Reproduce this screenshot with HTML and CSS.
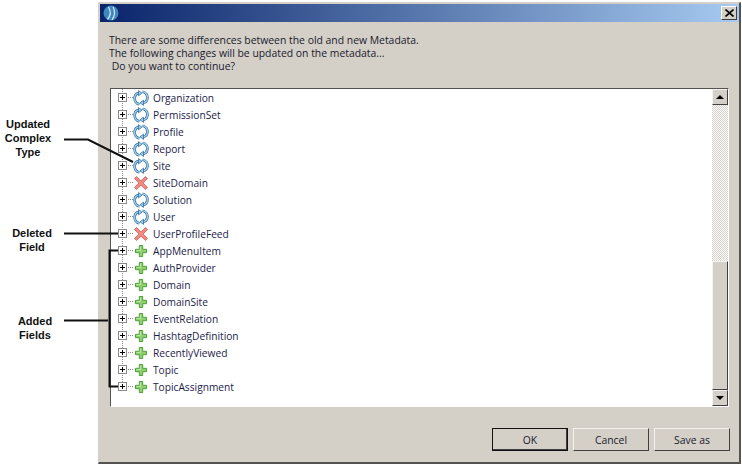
FILE: index.html
```html
<!DOCTYPE html>
<html lang="en">
<head>
<meta charset="utf-8">
<title>Metadata differences</title>
<link rel="stylesheet" href="styles.css">
</head>
<body>
<svg class="defs" width="0" height="0" aria-hidden="true">
  <symbol id="sync" viewBox="0 0 16 16">
    <g fill="none">
      <path d="M6.500 14.300 C3 13.500 1.300 10.500 1.700 7.300 C2 5 3.800 3.400 6 3.200" stroke="#2f6f9f" stroke-width="2.700"/>
      <path d="M9.500 1.700 C13 2.500 14.700 5.500 14.300 8.700 C14 11 12.200 12.600 10 12.800" stroke="#2f6f9f" stroke-width="2.700"/>
      <path d="M6.500 14.300 C3 13.500 1.300 10.500 1.700 7.300 C2 5 3.800 3.400 6 3.200" stroke="#a5cfec" stroke-width="1.300"/>
      <path d="M9.500 1.700 C13 2.500 14.700 5.500 14.300 8.700 C14 11 12.200 12.600 10 12.800" stroke="#a5cfec" stroke-width="1.300"/>
    </g>
    <path d="M5.500 .6 L9 3.200 L5.500 5.800 Z" fill="#a5cfec" stroke="#2f6f9f" stroke-width=".8"/>
    <path d="M10.500 10.200 L7 12.800 L10.500 15.400 Z" fill="#a5cfec" stroke="#2f6f9f" stroke-width=".8"/>
  </symbol>
  <symbol id="del" viewBox="0 0 16 16">
    <path d="M1.500 3.500 L3.500 1.500 L8 5.800 L12.500 1.500 L14.500 3.500 L10.200 8 L14.500 12.500 L12.500 14.500 L8 10.200 L3.500 14.500 L1.500 12.500 L5.800 8 Z" fill="#ee8a82" stroke="#c9605a" stroke-width=".8"/>
  </symbol>
  <symbol id="add" viewBox="0 0 16 16">
    <path d="M6.300 2.500 H9.700 V6.300 H13.500 V9.700 H9.700 V13.500 H6.300 V9.700 H2.500 V6.300 H6.300 Z" fill="#8fd06f" stroke="#4f9e3c" stroke-width="1"/>
    <path d="M7.400 3.500 V7.400 H3.500" fill="none" stroke="#c8eeb4" stroke-width=".8"/>
  </symbol>
  <symbol id="exp" viewBox="0 0 9 9">
    <rect x=".5" y=".5" width="8" height="8" fill="#fff" stroke="#8a8a8a"/>
    <path d="M2 4.500 H7 M4.500 2 V7" stroke="#000" fill="none"/>
  </symbol>
</svg>

<div class="screen">
  <div class="callout callout-complex">Updated<br>Complex<br>Type</div>
  <div class="callout callout-deleted">Deleted<br>Field</div>
  <div class="callout callout-added">Added<br>Fields</div>

  <div class="dialog">
    <header class="titlebar">
      <svg class="app-icon" width="16" height="16" viewBox="0 0 16 16">
        <circle cx="8" cy="8" r="7.500" fill="#3f87bf"/>
        <path d="M5.500 2 C8 6 7.500 11 4.500 14.500 M10 2 C12.300 6 11.800 11 9 14.800" fill="none" stroke="#d5e6f3" stroke-width="1.200"/>
      </svg>
      <button class="close" type="button" aria-label="Close">
        <svg width="9" height="8" viewBox="0 0 9 8"><path d="M.5 .5 L8.500 7.500 M8.500 .5 L.5 7.500" stroke="#000" stroke-width="1.600"/></svg>
      </button>
    </header>

    <div class="content">
      <p class="message">There are some differences between the old and new Metadata.<br>The following changes will be updated on the metadata...<br>&nbsp;Do you want to continue?</p>

      <div class="treebox">
        <ul class="tree">
          <li class="row"><svg class="exp"><use href="#exp"/></svg><span class="dots"></span><svg class="ic"><use href="#sync"/></svg><span>Organization</span></li>
          <li class="row"><svg class="exp"><use href="#exp"/></svg><span class="dots"></span><svg class="ic"><use href="#sync"/></svg><span>PermissionSet</span></li>
          <li class="row"><svg class="exp"><use href="#exp"/></svg><span class="dots"></span><svg class="ic"><use href="#sync"/></svg><span>Profile</span></li>
          <li class="row"><svg class="exp"><use href="#exp"/></svg><span class="dots"></span><svg class="ic"><use href="#sync"/></svg><span>Report</span></li>
          <li class="row"><svg class="exp"><use href="#exp"/></svg><span class="dots"></span><svg class="ic"><use href="#sync"/></svg><span>Site</span></li>
          <li class="row"><svg class="exp"><use href="#exp"/></svg><span class="dots"></span><svg class="ic"><use href="#del"/></svg><span>SiteDomain</span></li>
          <li class="row"><svg class="exp"><use href="#exp"/></svg><span class="dots"></span><svg class="ic"><use href="#sync"/></svg><span>Solution</span></li>
          <li class="row"><svg class="exp"><use href="#exp"/></svg><span class="dots"></span><svg class="ic"><use href="#sync"/></svg><span>User</span></li>
          <li class="row"><svg class="exp"><use href="#exp"/></svg><span class="dots"></span><svg class="ic"><use href="#del"/></svg><span>UserProfileFeed</span></li>
          <li class="row"><svg class="exp"><use href="#exp"/></svg><span class="dots"></span><svg class="ic"><use href="#add"/></svg><span>AppMenuItem</span></li>
          <li class="row"><svg class="exp"><use href="#exp"/></svg><span class="dots"></span><svg class="ic"><use href="#add"/></svg><span>AuthProvider</span></li>
          <li class="row"><svg class="exp"><use href="#exp"/></svg><span class="dots"></span><svg class="ic"><use href="#add"/></svg><span>Domain</span></li>
          <li class="row"><svg class="exp"><use href="#exp"/></svg><span class="dots"></span><svg class="ic"><use href="#add"/></svg><span>DomainSite</span></li>
          <li class="row"><svg class="exp"><use href="#exp"/></svg><span class="dots"></span><svg class="ic"><use href="#add"/></svg><span>EventRelation</span></li>
          <li class="row"><svg class="exp"><use href="#exp"/></svg><span class="dots"></span><svg class="ic"><use href="#add"/></svg><span>HashtagDefinition</span></li>
          <li class="row"><svg class="exp"><use href="#exp"/></svg><span class="dots"></span><svg class="ic"><use href="#add"/></svg><span>RecentlyViewed</span></li>
          <li class="row"><svg class="exp"><use href="#exp"/></svg><span class="dots"></span><svg class="ic"><use href="#add"/></svg><span>Topic</span></li>
          <li class="row"><svg class="exp"><use href="#exp"/></svg><span class="dots"></span><svg class="ic"><use href="#add"/></svg><span>TopicAssignment</span></li>
        </ul>
        <div class="scrollbar">
          <div class="sb-btn"><span class="arrow-up"></span></div>
          <div class="sb-track"></div>
          <div class="sb-thumb"></div>
          <div class="sb-btn"><span class="arrow-down"></span></div>
        </div>
      </div>

      <div class="actions">
        <button class="btn btn-default" type="button">OK</button>
        <button class="btn" type="button">Cancel</button>
        <button class="btn" type="button">Save as</button>
      </div>
    </div>
  </div>

  <svg class="leaders" width="742" height="465" viewBox="0 0 742 465" aria-hidden="true">
    <path d="M64 139.500 H88 L133 162" />
    <path d="M64 233.500 H118" />
    <path d="M64 320.500 H108" />
    <path d="M118 250.500 H109.500 V386.500 H118" />
  </svg>
</div>
</body>
</html>
```

FILE: styles.css
```css
* { box-sizing: border-box; }
html, body { margin: 0; padding: 0; background: #fff; }
body { width: 742px; height: 465px; overflow: hidden; }
.defs { position: absolute; }

.screen {
  position: relative;
  width: 742px;
  height: 465px;
  padding: 2px 1px 0 98px;
  font-family: "Open Sans", "Liberation Sans", sans-serif;
}

.callout {
  position: absolute;
  width: 56px;
  font: bold 11px/14px "Liberation Sans", Arial, sans-serif;
  color: #111;
  text-align: center;
}
.callout-complex { left: 0; top: 117px; }
.callout-deleted { left: 4px; top: 226px; }
.callout-added { left: 7px; top: 314px; }

.leaders {
  position: absolute;
  left: 0;
  top: 0;
  pointer-events: none;
}
.leaders path { fill: none; stroke: #111; stroke-width: 2; }

.dialog {
  height: 462px;
  display: flex;
  flex-direction: column;
  background: #d4d0c8;
  border-top: 1px solid #d4d0c8;
  border-left: 1px solid #d4d0c8;
  border-right: 2px solid #55534f;
  border-bottom: 2px solid #55534f;
  padding: 1px 0 0 1px;
}

.titlebar {
  flex: none;
  height: 18px;
  display: flex;
  align-items: center;
  justify-content: space-between;
  padding: 0 2px 0 3px;
  background: linear-gradient(to right, #0a246a, #a6caf0);
}
.app-icon { flex: none; }
.close {
  width: 16px;
  height: 14px;
  padding: 0;
  display: flex;
  align-items: center;
  justify-content: center;
  background: #d4d0c8;
  border: 1px solid;
  border-color: #fff #404040 #404040 #fff;
}

.content {
  flex: 1;
  display: flex;
  flex-direction: column;
  padding: 12px 11px 0 9px;
  min-height: 0;
}

.message {
  flex: none;
  margin: 0;
  height: 54px;
  font-size: 10.4px;
  line-height: 13px;
  color: #1a1a2e;
}

.treebox {
  flex: none;
  height: 319px;
  margin-right: -1px;
  display: flex;
  background: #fff;
  border: 1px solid;
  border-color: #55534f #fff #fff #55534f;
  margin-left: 1px;
}

.tree {
  flex: 1;
  list-style: none;
  margin: 0;
  padding: 0 0 0 7px;
  background-image: repeating-linear-gradient(to bottom, #8a8a8a 0 1px, transparent 1px 2px);
  background-size: 1px 298px;
  background-position: 11px 0;
  background-repeat: no-repeat;
}
.row {
  height: 17px;
  display: flex;
  align-items: center;
  font-size: 10.2px;
  color: #1c1c4a;
}
.exp { flex: none; width: 9px; height: 9px; }
.dots {
  flex: none;
  width: 5px;
  margin-left: 1px;
  height: 1px;
  background-image: repeating-linear-gradient(to right, #8a8a8a 0 1px, transparent 1px 2px);
}
.ic { flex: none; width: 16px; height: 16px; margin: 0 4px 0 0; }

.scrollbar {
  flex: none;
  width: 16px;
  display: flex;
  flex-direction: column;
}
.sb-btn {
  flex: none;
  height: 16px;
  display: flex;
  align-items: center;
  justify-content: center;
  background: #d4d0c8;
  border: 1px solid;
  border-color: #f4f3ef #404040 #404040 #f4f3ef;
}
.arrow-up, .arrow-down { width: 0; height: 0; border: 4px solid transparent; }
.arrow-up { border-bottom-color: #000; border-top-width: 0; }
.arrow-down { border-top-color: #000; border-bottom-width: 0; }
.sb-track {
  flex: 1;
  background-color: #fff;
  background-image: conic-gradient(#d4d0c8 25%, #fff 0 50%, #d4d0c8 0 75%, #fff 0);
  background-size: 2px 2px;
}
.sb-thumb {
  flex: none;
  height: 129px;
  background: #d4d0c8;
  border: 1px solid;
  border-color: #f4f3ef #404040 #404040 #f4f3ef;
}

.actions {
  flex: none;
  display: flex;
  justify-content: flex-end;
  gap: 5px;
  margin-top: 21px;
  margin-right: -2px;
}
.btn {
  width: 76px;
  height: 23px;
  padding: 0;
  font-family: inherit;
  font-size: 10.4px;
  color: #1a1a2e;
  background: #d4d0c8;
  border: 1px solid;
  border-color: #f4f3ef #404040 #404040 #f4f3ef;
}
.btn-default {
  border-color: #111;
  box-shadow: inset -1px -1px 0 #404040;
}
```
